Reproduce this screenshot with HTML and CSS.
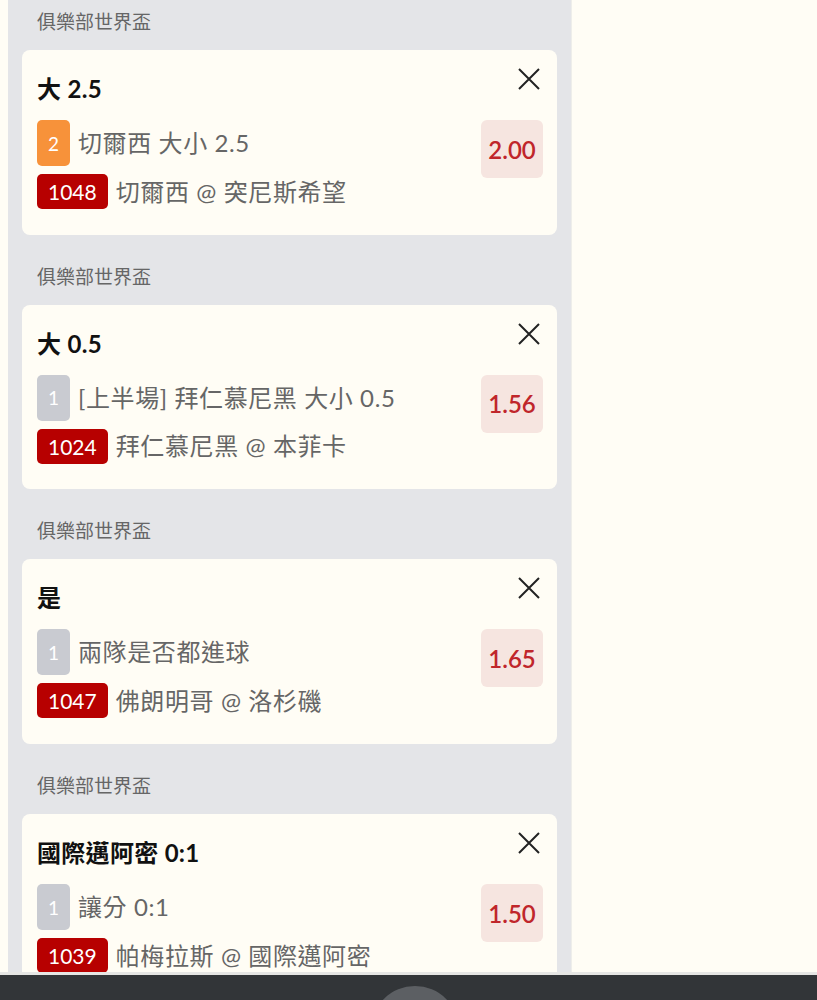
FILE: index.html
```html
<!DOCTYPE html>
<html lang="zh-Hant">
<head>
<meta charset="utf-8">
<title>投注單</title>
<link rel="stylesheet" href="styles.css">
</head>
<body>
<div class="viewport">
  <div class="panel">
    <section class="sec">
      <div class="league">俱樂部世界盃</div>
      <div class="card">
        <div class="head">
          <div class="title">大 2.5</div>
          <button class="close"><svg viewBox="0 0 24 24" width="24" height="24"><path d="M2 2L22 22M22 2L2 22" stroke="#222" stroke-width="2" fill="none"/></svg></button>
        </div>
        <div class="body">
          <div class="rows">
            <div class="row r1"><span class="num orange">2</span><span class="txt">切爾西 大小 2.5</span></div>
            <div class="row r2"><span class="code">1048</span><span class="txt">切爾西 @ 突尼斯希望</span></div>
          </div>
          <div class="odds">2.00</div>
        </div>
      </div>
    </section>
    <section class="sec">
      <div class="league">俱樂部世界盃</div>
      <div class="card">
        <div class="head">
          <div class="title">大 0.5</div>
          <button class="close"><svg viewBox="0 0 24 24" width="24" height="24"><path d="M2 2L22 22M22 2L2 22" stroke="#222" stroke-width="2" fill="none"/></svg></button>
        </div>
        <div class="body">
          <div class="rows">
            <div class="row r1"><span class="num grey">1</span><span class="txt">[上半場] 拜仁慕尼黑 大小 0.5</span></div>
            <div class="row r2"><span class="code">1024</span><span class="txt">拜仁慕尼黑 @ 本菲卡</span></div>
          </div>
          <div class="odds">1.56</div>
        </div>
      </div>
    </section>
    <section class="sec">
      <div class="league">俱樂部世界盃</div>
      <div class="card">
        <div class="head">
          <div class="title">是</div>
          <button class="close"><svg viewBox="0 0 24 24" width="24" height="24"><path d="M2 2L22 22M22 2L2 22" stroke="#222" stroke-width="2" fill="none"/></svg></button>
        </div>
        <div class="body">
          <div class="rows">
            <div class="row r1"><span class="num grey">1</span><span class="txt">兩隊是否都進球</span></div>
            <div class="row r2"><span class="code">1047</span><span class="txt">佛朗明哥 @ 洛杉磯</span></div>
          </div>
          <div class="odds">1.65</div>
        </div>
      </div>
    </section>
    <section class="sec">
      <div class="league">俱樂部世界盃</div>
      <div class="card">
        <div class="head">
          <div class="title">國際邁阿密 0:1</div>
          <button class="close"><svg viewBox="0 0 24 24" width="24" height="24"><path d="M2 2L22 22M22 2L2 22" stroke="#222" stroke-width="2" fill="none"/></svg></button>
        </div>
        <div class="body">
          <div class="rows">
            <div class="row r1"><span class="num grey">1</span><span class="txt">讓分 0:1</span></div>
            <div class="row r2"><span class="code">1039</span><span class="txt">帕梅拉斯 @ 國際邁阿密</span></div>
          </div>
          <div class="odds">1.50</div>
        </div>
      </div>
    </section>
  </div>
</div>
<div class="bar"><div class="fab"></div></div>
</body>
</html>
```
FILE: styles.css
```css
html, body {
  margin: 0;
  padding: 0;
  height: 1000px;
  overflow: hidden;
  background: #fffdf5;
  font-family: Lato, "Noto Sans CJK TC", sans-serif;
}
.viewport {
  height: 972px;
  overflow: hidden;
  padding-left: 8px;
}
.panel {
  width: 535px;
  background: #e4e5e8;
  border-right: 1px solid #eeeeea;
  padding: 10px 14px 40px 14px;
}
.sec + .sec .league {
  margin-top: 30px;
}
.league {
  font-size: 19px;
  line-height: 24px;
  color: #666;
  padding-left: 15px;
  margin-bottom: 16px;
}
.card {
  background: #fffdf5;
  border-radius: 8px;
  padding: 17px 14px 25px 15px;
  height: 142.7px;
}
.head {
  display: flex;
  justify-content: space-between;
  align-items: flex-start;
}
.title {
  padding-top: 7px;
  font-size: 24px;
  line-height: 30px;
  letter-spacing: 0.3px;
  font-weight: 700;
  color: #111;
}
.close {
  border: 0;
  background: none;
  padding: 0;
  margin-right: 2px;
  width: 24px;
  height: 24px;
}
.close svg { display: block; }
.body {
  display: flex;
  justify-content: space-between;
  align-items: flex-start;
  margin-top: 16px;
}
.rows {
  display: flex;
  flex-direction: column;
  gap: 8px;
}
.row {
  display: flex;
  align-items: center;
  gap: 8px;
}
.txt {
  font-size: 24px;
  letter-spacing: 0.6px;
  color: #666;
  line-height: 30px;
}
.num {
  width: 33px;
  height: 46px;
  border-radius: 5px;
  color: #fff;
  font-size: 19px;
  display: flex;
  align-items: center;
  justify-content: center;
}
.orange { background: #f7923a; }
.grey { background: #c9cbd1; }
.code {
  height: 35px;
  padding: 0 11px;
  border-radius: 5px;
  background: #b70000;
  color: #fff;
  font-size: 21px;
  display: flex;
  align-items: center;
}
.odds {
  width: 62px;
  height: 58px;
  border-radius: 6px;
  background: #f6e5e0;
  color: #c0262b;
  font-size: 24px;
  font-weight: 600;
  display: flex;
  align-items: center;
  justify-content: center;
}
.bar {
  height: 25px;
  border-top: 3px solid #e6e6e4;
  background: #323538;
  display: flex;
  justify-content: center;
  overflow: hidden;
}
.fab {
  margin-top: 11px;
  margin-left: 13px;
  width: 88px;
  height: 88px;
  border-radius: 50%;
  background: #5c5f63;
  flex: none;
}
```
